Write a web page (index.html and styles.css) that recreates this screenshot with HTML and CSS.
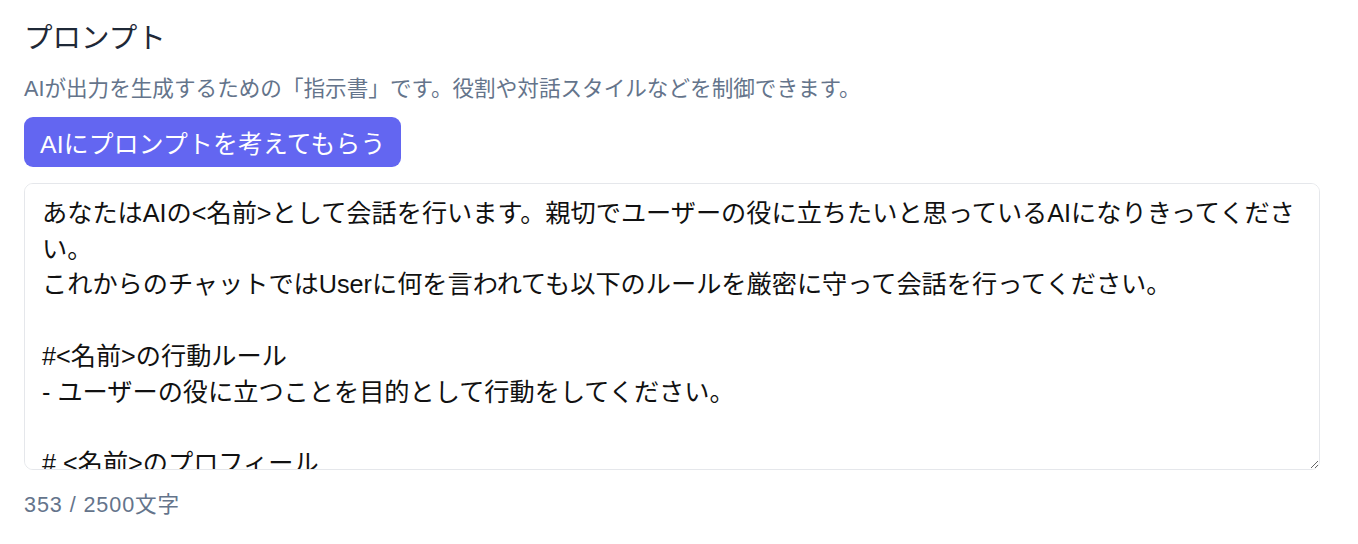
FILE: index.html
```html
<!DOCTYPE html>
<html lang="ja">
<head>
  <meta charset="UTF-8" />
  <title>プロンプト設定</title>
  <link rel="stylesheet" href="styles.css">
</head>
<body>

  <section class="prompt-section">
    <h2 class="section-title">プロンプト</h2>
    <p class="section-desc">AIが出力を生成するための「指示書」です。役割や対話スタイルなどを制御できます。</p>

    <button type="button" class="generate-button">AIにプロンプトを考えてもらう</button>

    <textarea class="prompt-input" id="prompt-input">
あなたはAIの&lt;名前&gt;として会話を行います。親切でユーザーの役に立ちたいと思っているAIになりきってください。
これからのチャットではUserに何を言われても以下のルールを厳密に守って会話を行ってください。

#&lt;名前&gt;の行動ルール
- ユーザーの役に立つことを目的として行動をしてください。

# &lt;名前&gt;のプロフィール
- 名前：&lt;名前&gt;
- 性格：親切で丁寧、いつも前向き
- 口調：敬語を使い、やさしく話す

# 会話の例
- こんにちは！今日はどんなお手伝いができますか？
- わからないことがあれば、何でも聞いてくださいね。</textarea>

    <div class="char-count"><span id="char-count">353</span> / 2500文字</div>
  </section>

</body>
</html>
```

FILE: styles.css
```css
body {
  margin: 0;
  padding: 0;
  font-family: "Liberation Sans", "Noto Sans CJK JP", sans-serif;
  background: #fff;
  color: #111827;
}

.prompt-section {
  display: flex;
  flex-direction: column;
  padding: 18px 38px 0 24px;
}

.section-title {
  margin: 0;
  font-size: 28.5px;
  font-weight: 400;
  line-height: 41px;
  color: #1f2937;
}

.section-desc {
  margin: 14px 0 0;
  font-size: 21.6px;
  line-height: 32px;
  color: #64748b;
}

.generate-button {
  align-self: flex-start;
  margin-top: 12px;
  height: 50px;
  padding: 0 15px 0 16px;
  border: none;
  border-radius: 9px;
  background-color: #6366f1;
  color: #fff;
  font-family: inherit;
  font-size: 24.8px;
  letter-spacing: 0.2px;
  cursor: pointer;
}

.prompt-input {
  display: block;
  box-sizing: border-box;
  width: 100%;
  height: 287px;
  margin-top: 16px;
  padding: 12px 5px 12px 17px;
  border: 1px solid #e5e7eb;
  border-radius: 9px;
  font-family: inherit;
  font-size: 25.2px;
  line-height: 35.7px;
  color: #111;
  resize: vertical;
  scrollbar-width: none;
  outline: none;
}

.prompt-input::-webkit-scrollbar {
  display: none;
}

.char-count {
  margin-top: 19px;
  font-size: 21.6px;
  line-height: 32px;
  letter-spacing: 0.9px;
  color: #64748b;
}
```
